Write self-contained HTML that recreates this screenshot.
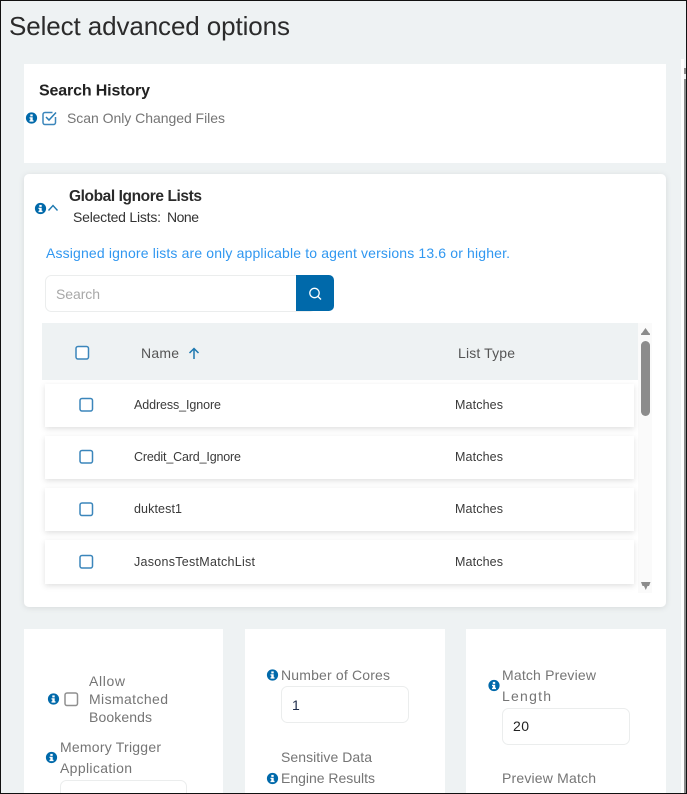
<!DOCTYPE html>
<html><head><meta charset="utf-8"><style>
html,body{margin:0;padding:0;background:#eef2f3}
svg{display:block}
text{font-family:"Liberation Sans",sans-serif}
.l{font-size:14px;fill:#757575}
.r{font-size:12.5px;fill:#3a3a3a}
.h{font-size:14px;fill:#555}
</style></head><body>
<svg width="687" height="794" viewBox="0 0 687 794" xmlns="http://www.w3.org/2000/svg">
<defs>
<filter id="s" x="-5%" y="-20%" width="110%" height="150%"><feDropShadow dx="0" dy="2" stdDeviation="3" flood-color="#000" flood-opacity=".12"/></filter>
<filter id="c" x="-5%" y="-5%" width="110%" height="110%"><feDropShadow dx="0" dy="1" stdDeviation="3" flood-color="#000" flood-opacity=".1"/></filter>
<g id="i"><circle r="5.600" fill="#0069aa"/><rect x="-1.200" y="-3.600" width="2.400" height="2" fill="#fff"/><path d="M-2-.8H1.200V2.200H2V3.600H-2V2.200H-1.200V.5H-2Z" fill="#fff"/></g>
<rect id="b" width="12.500" height="12.500" rx="2" fill="#fff" stroke="#3b86bb" stroke-width="1.500"/>
</defs>
<rect width="687" height="794" fill="#eef2f3"/>
<rect x="681" y="59" width="3" height="735" fill="#fff"/>
<rect x="684" y="68" width="2" height="6" fill="#8c8c8c"/>
<rect x="684" y="79" width="2" height="715" fill="#8c8c8c"/>

<text x="9" y="35" font-size="26" fill="#2b2b2b" textLength="281" lengthAdjust="spacing">Select advanced options</text>

<rect x="24" y="64" width="642" height="99" fill="#fff"/>
<text x="39" y="95.500" font-size="16" font-weight="700" fill="#222" textLength="111" lengthAdjust="spacing">Search History</text>
<use href="#i" x="31.500" y="118"/>
<path d="M52.500 112.500H45a2 2 0 0 0-2 2V122.500a2 2 0 0 0 2 2H53.500a2 2 0 0 0 2-2V117" fill="none" stroke="#3b86bb" stroke-width="1.500"/>
<path d="M46 117l3 3 7-7.500" fill="none" stroke="#2a7db5" stroke-width="1.500"/>
<text class="l" x="67" y="123" textLength="158" lengthAdjust="spacing">Scan Only Changed Files</text>

<rect x="24" y="174" width="642" height="433" rx="5" fill="#fff" filter="url(#c)"/>
<use href="#i" x="40.500" y="208.500"/>
<path d="M48.500 210.500L53 205.500L57.500 210.500" fill="none" stroke="#1d78b0" stroke-width="1.400"/>
<text x="69" y="201" font-size="15.500" font-weight="700" fill="#2a2a2a" textLength="133" lengthAdjust="spacing">Global Ignore Lists</text>
<text x="73" y="222" font-size="14" fill="#333" textLength="88" lengthAdjust="spacing">Selected Lists:</text>
<text x="167" y="222" font-size="14" fill="#333" textLength="32" lengthAdjust="spacing">None</text>
<text x="46" y="258" font-size="14" fill="#3097f0" textLength="464" lengthAdjust="spacing">Assigned ignore lists are only applicable to agent versions 13.6 or higher.</text>

<rect x="45.500" y="275.500" width="270" height="36" rx="6" fill="#fff" stroke="#ebeded"/>
<path d="M296 275H329a5 5 0 0 1 5 5V306a5 5 0 0 1-5 5H296Z" fill="#0069aa"/>
<circle cx="314.500" cy="293" r="4.700" fill="none" stroke="#fff" stroke-width="1.300"/>
<path d="M318 296.500l3 3" stroke="#fff" stroke-width="1.300"/>
<text x="56" y="299" font-size="14" fill="#a8a8a8" textLength="44" lengthAdjust="spacing">Search</text>

<rect x="638" y="323" width="14" height="270" fill="#fafafa"/>
<rect x="42" y="323" width="596" height="57" fill="#eef2f3"/>
<use href="#b" x="76" y="346.500"/>
<text class="h" x="141" y="358" textLength="38" lengthAdjust="spacing">Name</text>
<path d="M194 359V349M189.500 353L194 348.500L198.500 353" fill="none" stroke="#1d78b0" stroke-width="1.500"/>
<text class="h" x="458" y="358" textLength="57" lengthAdjust="spacing">List Type</text>

<path d="M641 335Q641 333 642 333L645.500 328L649 333Q650 333 650 335Z" fill="#8c8c8c"/>
<rect x="641" y="341" width="9" height="75" rx="4.500" fill="#8c8c8c"/>
<path d="M641 582H650.500L649 586L647.500 586L645.800 590L644 586L642.500 586Z" fill="#8c8c8c"/>

<rect x="45" y="384" width="589" height="43" fill="#fff" filter="url(#s)"/>
<rect x="45" y="436" width="589" height="43" fill="#fff" filter="url(#s)"/>
<rect x="45" y="488" width="589" height="43" fill="#fff" filter="url(#s)"/>
<rect x="45" y="540" width="589" height="44" fill="#fff" filter="url(#s)"/>

<use href="#b" x="80" y="398.500"/>
<use href="#b" x="80" y="450.500"/>
<use href="#b" x="80" y="503"/>
<use href="#b" x="80" y="555.500"/>

<text class="r" x="134" y="409" textLength="87" lengthAdjust="spacing">Address_Ignore</text>
<text class="r" x="455" y="409" textLength="48" lengthAdjust="spacing">Matches</text>
<text class="r" x="134" y="461" textLength="107" lengthAdjust="spacing">Credit_Card_Ignore</text>
<text class="r" x="455" y="461" textLength="48" lengthAdjust="spacing">Matches</text>
<text class="r" x="134" y="513" textLength="48" lengthAdjust="spacing">duktest1</text>
<text class="r" x="455" y="513" textLength="48" lengthAdjust="spacing">Matches</text>
<text class="r" x="134" y="566" textLength="121" lengthAdjust="spacing">JasonsTestMatchList</text>
<text class="r" x="455" y="566" textLength="48" lengthAdjust="spacing">Matches</text>

<rect x="24" y="629" width="199" height="165" fill="#fff"/>
<rect x="245" y="629" width="200" height="165" fill="#fff"/>
<rect x="466" y="629" width="200" height="165" fill="#fff"/>

<use href="#i" x="53.500" y="699"/>
<rect x="65" y="693" width="12.500" height="12.500" rx="2" fill="#fff" stroke="#8f8f8f" stroke-width="1.500"/>
<text class="l" x="89" y="686" textLength="36" lengthAdjust="spacing">Allow</text>
<text class="l" x="89" y="704" textLength="79" lengthAdjust="spacing">Mismatched</text>
<text class="l" x="89" y="722" textLength="63" lengthAdjust="spacing">Bookends</text>
<use href="#i" x="51.500" y="757.500"/>
<text class="l" x="60" y="752" textLength="101" lengthAdjust="spacing">Memory Trigger</text>
<text class="l" x="60" y="773" textLength="72" lengthAdjust="spacing">Application</text>
<rect x="60.500" y="780.500" width="126" height="30" rx="6" fill="#fff" stroke="#ebeded"/>

<use href="#i" x="272.500" y="675"/>
<text class="l" x="281" y="680" textLength="109" lengthAdjust="spacing">Number of Cores</text>
<rect x="281.500" y="686.500" width="127" height="36" rx="6" fill="#fff" stroke="#ebeded"/>
<text x="292" y="710" font-size="14" fill="#1d2b4a">1</text>
<text class="l" x="281" y="762" textLength="91" lengthAdjust="spacing">Sensitive Data</text>
<use href="#i" x="272.500" y="778.500"/>
<text class="l" x="281" y="783" textLength="94" lengthAdjust="spacing">Engine Results</text>

<use href="#i" x="494" y="685.500"/>
<text class="l" x="502" y="680" textLength="94" lengthAdjust="spacing">Match Preview</text>
<text class="l" x="502" y="701" textLength="49" lengthAdjust="spacing">Length</text>
<rect x="502.500" y="708.500" width="127" height="36" rx="6" fill="#fff" stroke="#ebeded"/>
<text x="513" y="731" font-size="14" fill="#222" textLength="16" lengthAdjust="spacing">20</text>
<text class="l" x="502" y="783" textLength="94" lengthAdjust="spacing">Preview Match</text>

<rect x="0" y="0" width="687" height="1" fill="#111"/>
<rect x="0" y="0" width="1" height="794" fill="#111"/>
<rect x="686" y="0" width="1" height="794" fill="#111"/>
<rect x="0" y="793" width="687" height="1" fill="#111"/>
</svg>
</body></html>
